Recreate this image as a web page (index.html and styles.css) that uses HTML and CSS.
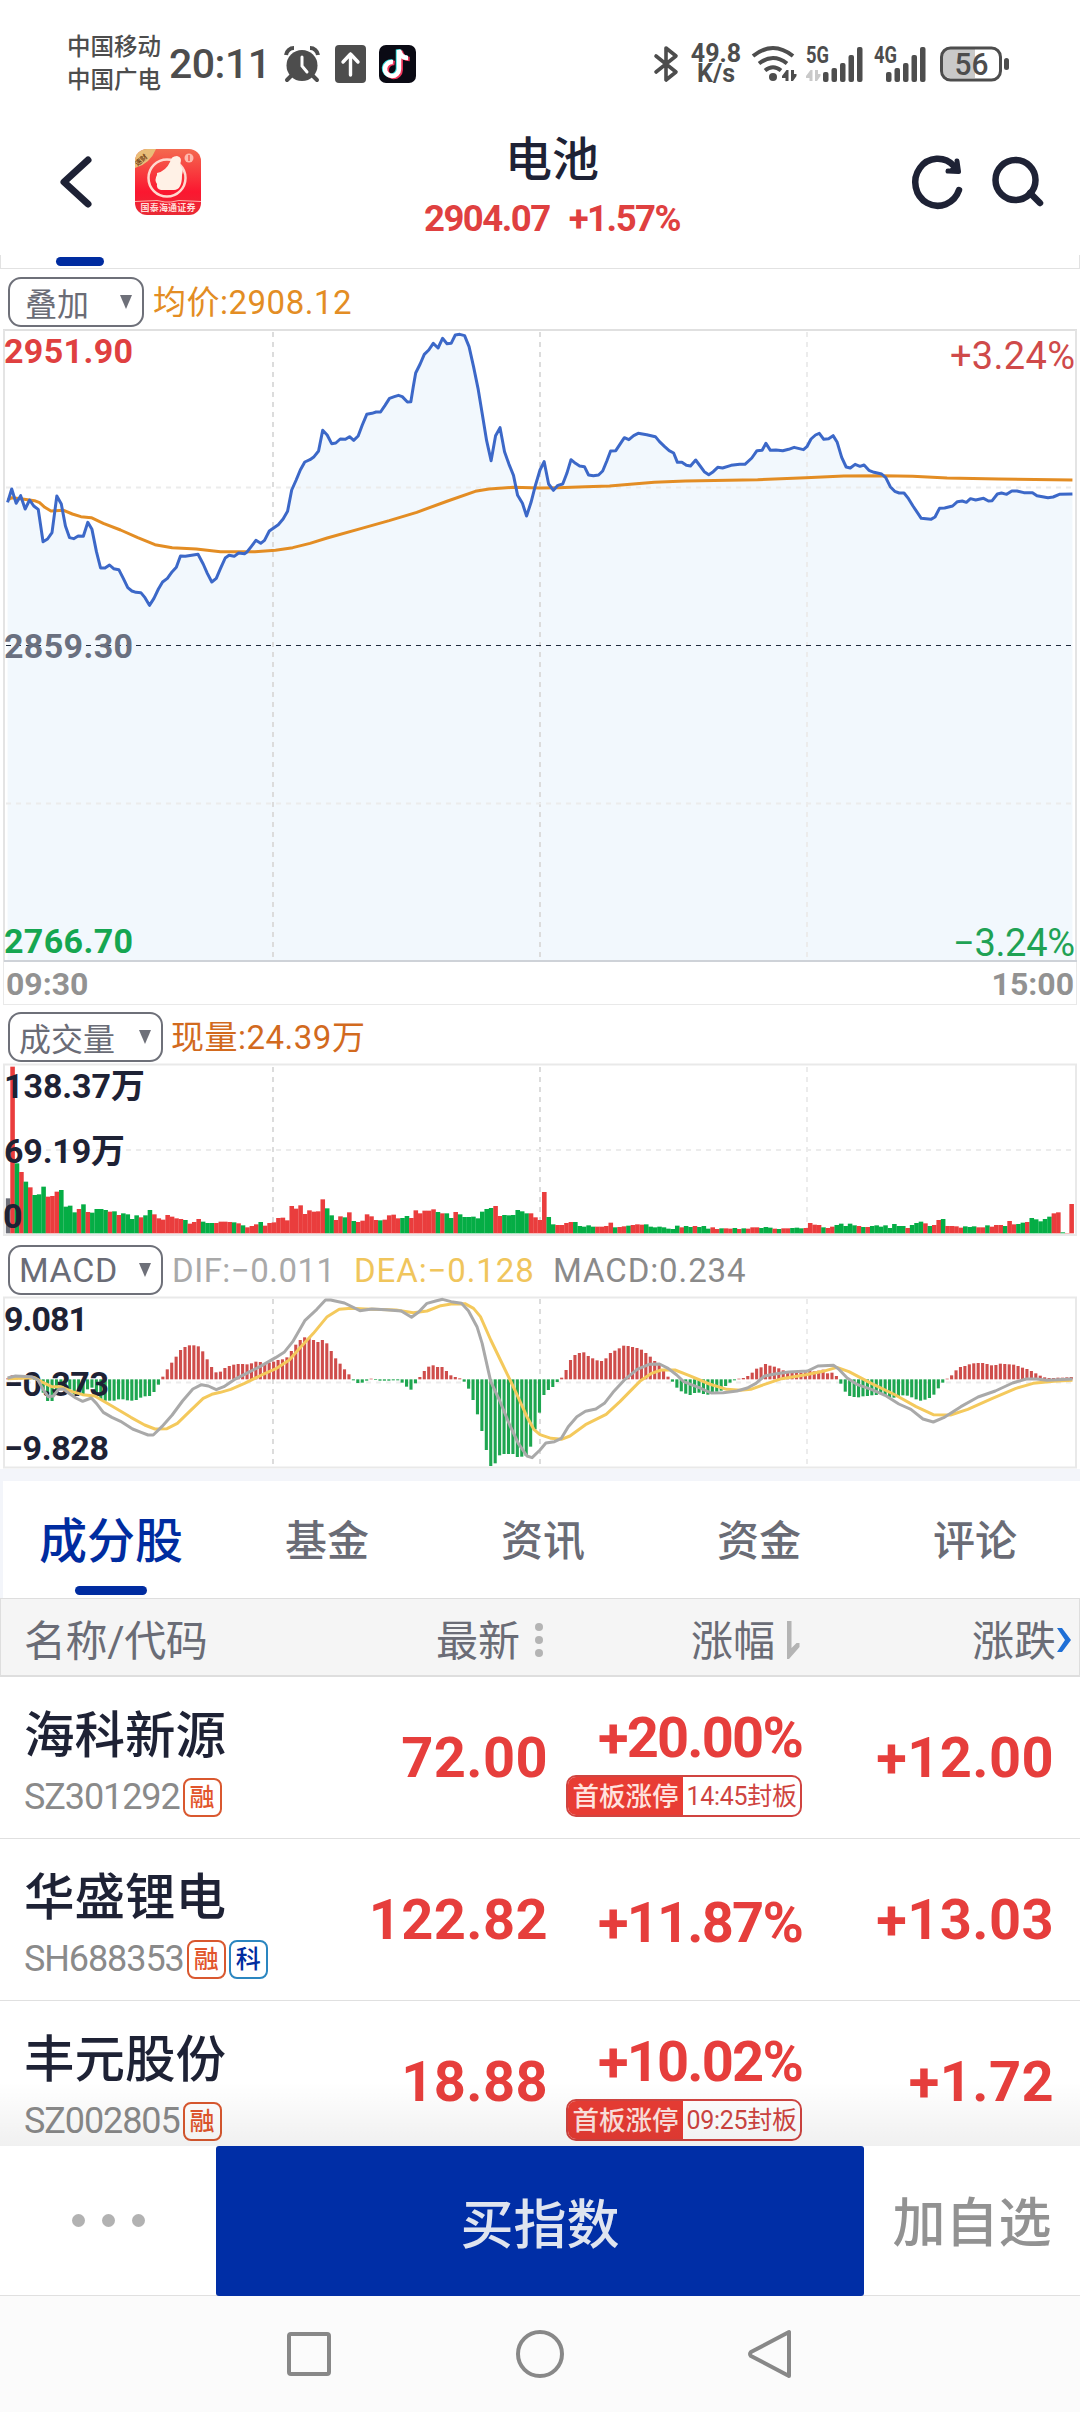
FILE: index.html
```
<!DOCTYPE html>
<html lang="zh-CN">
<head>
  <meta charset="UTF-8" />
  <title>电池</title>
  <link rel="stylesheet" href="styles.css">
</head>
<body>
  <!-- Status bar -->
  <div class="status-bar">
    <div class="carriers"><div>中国移动</div><div>中国广电</div></div>
    <div class="clock">20:11</div>
    <svg class="ic-alarm" width="36" height="36" viewBox="0 0 36 36">
      <circle cx="18" cy="19.500" r="15.500" fill="#4d4d4d"/>
      <path d="M2 9a8 8 0 0 1 8-7M34 9a8 8 0 0 0-8-7" stroke="#4d4d4d" stroke-width="4" fill="none"/>
      <path d="M7 30l-4 4M29 30l4 4" stroke="#4d4d4d" stroke-width="4" stroke-linecap="round"/>
      <path d="M18 11v9l5 6" stroke="#fff" stroke-width="3" stroke-linecap="round" fill="none"/>
    </svg>
    <svg class="ic-upload" width="31" height="38" viewBox="0 0 31 38">
      <rect width="31" height="38" rx="4" fill="#4d4d4d"/>
      <path d="M15.500 30V9M8 17l7.500-8 7.500 8" stroke="#fff" stroke-width="3.400" stroke-linecap="round" stroke-linejoin="round" fill="none"/>
    </svg>
    <svg class="ic-tiktok" width="37" height="38" viewBox="0 0 37 38">
      <rect width="37" height="38" rx="7" fill="#0a0a14"/>
      <g fill="none" stroke-width="4.500">
        <path d="M14 17a7 7 0 1 0 6 7V5c1 5 4 8 9 8" stroke="#35e0df" transform="translate(-1 -.5)"/>
        <path d="M14 17a7 7 0 1 0 6 7V5c1 5 4 8 9 8" stroke="#f0375c" transform="translate(1.700 1)"/>
        <path d="M14 17a7 7 0 1 0 6 7V5c1 5 4 8 9 8" stroke="#fff"/>
      </g>
    </svg>

    <svg class="ic-bt" width="25" height="36" viewBox="0 0 25 36">
      <path d="M2 10l20 16-10 8V2l10 8L2 26" fill="none" stroke="#4d4d4d" stroke-width="3.600" stroke-linejoin="round" stroke-linecap="round"/>
    </svg>
    <div class="net-speed"><div>49.8</div><div>K/s</div></div>
    <svg class="ic-wifi" width="45" height="38" viewBox="0 0 45 38">
      <g fill="none" stroke="#4d4d4d" stroke-width="4">
        <path d="M2 11q20-16 40 0M8 18.500q14-11 28 0M14 25.500q8-6.500 16 0"/>
      </g>
      <circle cx="22" cy="32" r="4" fill="#4d4d4d"/>
      <path d="M37.500 36V25h-2l-4.500 6v2h3.500v3zM40 25v11h2l3.500-5v-2H43v-4z" fill="#4d4d4d"/>
    </svg>
    <svg class="ic-5g" width="58" height="38" viewBox="0 0 58 38">
      <text x="0" y="18" textLength="23" lengthAdjust="spacingAndGlyphs" class="net-type">5G</text>
      <path d="M6.500 36V25h-2L0 31v2h3.500v3zM9 25v11h2l3.500-5v-2H12v-4z" fill="#c9c9c9"/>
      <g fill="#4d4d4d">
        <rect x="17" y="27" width="5.500" height="10" rx="2"/>
        <rect x="25.500" y="23" width="5.500" height="14" rx="2"/>
        <rect x="34" y="18" width="5.500" height="19" rx="2"/>
        <rect x="42.500" y="10" width="5.500" height="27" rx="2"/>
        <rect x="51" y="2" width="5.500" height="35" rx="2"/>
      </g>
    </svg>
    <svg class="ic-4g" width="53" height="38" viewBox="0 0 53 38">
      <text x="0" y="18" textLength="23" lengthAdjust="spacingAndGlyphs" class="net-type">4G</text>
      <g fill="#4d4d4d">
        <rect x="12" y="27" width="5.500" height="10" rx="2"/>
        <rect x="20.500" y="23" width="5.500" height="14" rx="2"/>
        <rect x="29" y="18" width="5.500" height="19" rx="2"/>
        <rect x="37.500" y="10" width="5.500" height="27" rx="2"/>
        <rect x="46" y="2" width="5.500" height="35" rx="2"/>
      </g>
    </svg>
    <svg class="ic-battery" width="70" height="36" viewBox="0 0 70 36">
      <path d="M10 3h25v29H10a7 7 0 0 1-7-7V10a7 7 0 0 1 7-7z" fill="#c9c9c9"/>
      <rect x="1.500" y="2" width="59" height="32" rx="9" fill="none" stroke="#4d4d4d" stroke-width="3"/>
      <rect x="64" y="12" width="5" height="12" rx="2.500" fill="#4d4d4d"/>
      <text x="14.500" y="29" textLength="34" lengthAdjust="spacingAndGlyphs" class="battery-text">56</text>
    </svg>
  </div>

  <!-- Header -->
  <div class="header">
    <svg class="ic-back" width="32" height="52" viewBox="0 0 32 52">
      <path d="M28 4L4 26l24 22" fill="none" stroke="#1e2235" stroke-width="7" stroke-linecap="round" stroke-linejoin="round"/>
    </svg>
    <svg class="app-logo" width="66" height="66" viewBox="0 0 66 66">
      <defs>
        <linearGradient id="logo-bg" x1="0" y1="0" x2="0" y2="1"><stop offset="0" stop-color="#f4694f"/><stop offset=".65" stop-color="#fb1730"/><stop offset="1" stop-color="#e92a35"/></linearGradient>
        <clipPath id="logo-clip"><rect width="66" height="66" rx="12"/></clipPath>
      </defs>
      <g clip-path="url(#logo-clip)">
        <rect width="66" height="66" fill="url(#logo-bg)"/>
        <path d="M0 0h21Q15 15 0 19z" fill="#e9bd78"/>
        <text x="0" y="17" font-size="7" class="logo-text" fill="#7b4a1d" transform="rotate(-42 2 14)">速财</text>
        <circle cx="32" cy="29" r="18.500" fill="none" stroke="#ffd9cf" stroke-width="2.500"/>
        <path d="M22 24q9-2 13-11 1-6 7-6 6 1 3 9 4 4 2 10 0 16-9 15H26q-5-1-4-6-3-4 0-9z" fill="#fff1e6"/>
        <circle cx="54" cy="9" r="4.500" fill="#ffb9ac"/>
        <path d="M54 6v6" stroke="#f4594b" stroke-width="1.500"/>
        <path d="M0 52.500l22-1 8 1.500h6l8-1.500 22 1" stroke="#ffb3ab" fill="none"/>
        <text x="5.500" y="62" font-size="9" textLength="55" class="logo-text" fill="#ffdcd8">国泰海通证券</text>
      </g>
    </svg>
    <div class="title">
      <h1>电池</h1>
      <div class="quote"><span>2904.07</span><span>+1.57%</span></div>
    </div>
    <svg class="ic-refresh" width="52" height="54" viewBox="0 0 52 54">
      <path d="M47 35A22.500 23.500 0 1 1 42 11" fill="none" stroke="#1e2235" stroke-width="6.500" stroke-linecap="round"/>
      <path d="M45 6l1.500 10.500-10.500-.5" fill="#1e2235" stroke="#1e2235" stroke-width="5" stroke-linecap="round" stroke-linejoin="round"/>
    </svg>
    <svg class="ic-search" width="52" height="54" viewBox="0 0 52 54">
      <circle cx="23.500" cy="25" r="20" fill="none" stroke="#1e2235" stroke-width="6.500"/>
      <path d="M38 38l10 10" stroke="#1e2235" stroke-width="6.500" stroke-linecap="round"/>
    </svg>
  </div>
  <div class="scroll-edge"><span class="pill"></span></div>

  <!-- Time-sharing chart -->
  <div class="chart-bar bar-price">
    <button class="picker picker-sm"><span>叠加</span><i></i></button>
    <span class="legend avg">均价:2908.12</span>
  </div>
  <svg class="chart" width="1080" height="633" viewBox="0 329 1080 633">
    <g transform="translate(0 270) scale(.34439 .33333)">
      <path id="price-area" fill="#f2f8fd"/>
    </g>
    <g class="grid">
      <path d="M273 332V961M540 332V961"/>
      <path class="faint" d="M807 332V961M6 487.500H1073M6 803.500H1073"/>
    </g>
    <path d="M6 645.500H1073" stroke="#1f2a3c" stroke-width="1.200" stroke-dasharray="5 5"/>
    <path d="M3 330H1077" stroke="#e0e0e0" stroke-width="2"/>
    <path d="M4 330V962M1076 330V962" stroke="#e4e4e4" stroke-width="2"/>
    <path d="M4 961H1077" stroke="#ced2d8" stroke-width="2"/>
    <g transform="translate(0 270) scale(.34439 .33333)">
      <polyline id="avg-line" class="line" stroke="#e38d24"/>
      <polyline id="price-line" class="line" stroke="#3c68c8"/>
    </g>
    <g class="axis">
      <text x="4" y="362.500" textLength="129" fill="#df4040">2951.90</text>
      <text x="4" y="657.500" textLength="129" fill="#6a7080">2859.30</text>
      <text x="4" y="952.500" textLength="129" fill="#15a651">2766.70</text>
    </g>
    <g class="axis-pct">
      <text x="950" y="368.500" textLength="125" fill="#cf4a4a">+3.24%</text>
      <text x="953" y="955.500" textLength="122" fill="#1fa255">−3.24%</text>
    </g>
  </svg>
  <div class="time-axis"><span>09:30</span><span>15:00</span></div>

  <!-- Volume -->
  <div class="chart-bar bar-volume">
    <button class="picker"><span>成交量</span><i></i></button>
    <span class="legend vol">现量:24.39万</span>
  </div>
  <svg class="chart" width="1080" height="172" viewBox="0 1064 1080 172">
    <g class="grid">
      <path d="M273 1067V1233M540 1067V1233"/>
      <path class="faint" d="M807 1067V1233M6 1150H1073"/>
    </g>
    <rect x="4" y="1064.500" width="1072" height="170.500" class="frame"/>
    <g id="volume-bars" transform="translate(0 900) scale(.34439 .33333)"></g>
    <g class="axis" fill="#1e2235">
      <text x="4" y="1098" textLength="141">138.37万</text>
      <text x="4" y="1163" textLength="121">69.19万</text>
      <text x="3" y="1228">0</text>
    </g>
  </svg>

  <!-- MACD -->
  <div class="chart-bar bar-macd">
    <button class="picker"><span class="latin">MACD</span><i></i></button>
    <span class="legend dif">DIF:−0.011</span>
    <span class="legend dea">DEA:−0.128</span>
    <span class="legend macd">MACD:0.234</span>
  </div>
  <svg class="chart" width="1080" height="172" viewBox="0 1297 1080 172">
    <g class="grid">
      <path d="M273 1299V1467M540 1299V1467"/>
      <path class="faint" d="M807 1299V1467M6 1382.500H1073"/>
    </g>
    <rect x="4" y="1297.500" width="1072" height="170" class="frame"/>
    <g id="macd-bars" transform="translate(0 1240) scale(.34439 .33333)"></g>
    <g class="axis" fill="#1e2235">
      <text x="4" y="1330.500" textLength="84">9.081</text>
      <text x="4" y="1395.500" textLength="105">−0.373</text>
      <text x="4" y="1459.500" textLength="105">−9.828</text>
    </g>
    <g transform="translate(0 1240) scale(.34439 .33333)">
      <polyline id="dea-line" class="line" stroke="#f4c95c"/>
      <polyline id="dif-line" class="line" stroke="#a9a9a9"/>
    </g>
  </svg>
  <div class="divider"></div>

  <!-- Tabs -->
  <div class="tabs">
    <div class="tab active">成分股</div>
    <div class="tab">基金</div>
    <div class="tab">资讯</div>
    <div class="tab">资金</div>
    <div class="tab">评论</div>
  </div>

  <!-- Constituents -->
  <div class="row table-head">
    <div class="col-name">名称/代码</div>
    <div class="col-price">最新
      <svg width="12" height="38" viewBox="0 0 12 38"><g fill="#b4b4b4"><circle cx="6" cy="6" r="4"/><circle cx="6" cy="19" r="4"/><circle cx="6" cy="32" r="4"/></g></svg>
    </div>
    <div class="col-pct">涨幅
      <svg width="13" height="40" viewBox="0 0 13 40"><path d="M0 1h4.500v27l5-5h3v4L2 39H0z" fill="#b4b4b4"/></svg>
    </div>
    <div class="col-change">涨跌<svg width="16" height="26" viewBox="0 0 16 26"><path d="M1 1h5l9 12-9 12H1l8-12z" fill="#1f6fd6"/></svg></div>
  </div>
  <div class="list">
    <div class="row stock">
      <div class="col-name">
        <div class="name">海科新源</div>
        <div class="code"><span>SZ301292</span><b class="tag">融</b></div>
      </div>
      <div class="col-price">72.00</div>
      <div class="col-pct"><div>+20.00%</div><div class="limit"><b>首板涨停</b><span>14:45封板</span></div></div>
      <div class="col-change">+12.00</div>
    </div>
    <div class="row stock">
      <div class="col-name">
        <div class="name">华盛锂电</div>
        <div class="code"><span>SH688353</span><b class="tag">融</b><b class="tag tag-blue">科</b></div>
      </div>
      <div class="col-price">122.82</div>
      <div class="col-pct"><div>+11.87%</div></div>
      <div class="col-change">+13.03</div>
    </div>
    <div class="row stock">
      <div class="col-name">
        <div class="name">丰元股份</div>
        <div class="code"><span>SZ002805</span><b class="tag">融</b></div>
      </div>
      <div class="col-price">18.88</div>
      <div class="col-pct"><div>+10.02%</div><div class="limit"><b>首板涨停</b><span>09:25封板</span></div></div>
      <div class="col-change">+1.72</div>
    </div>
    <div class="list-shade"></div>
  </div>

  <!-- Bottom actions -->
  <div class="actions">
    <div class="more"><i></i><i></i><i></i></div>
    <button class="buy">买指数</button>
    <div class="watch">加自选</div>
  </div>
  <div class="nav">
    <svg width="48" height="52" viewBox="0 0 48 52"><rect x="4" y="6" width="40" height="40" rx="2" class="nav-ic"/></svg>
    <svg width="50" height="52" viewBox="0 0 50 52"><circle cx="25" cy="26" r="22" class="nav-ic"/></svg>
    <svg width="48" height="52" viewBox="0 0 48 52"><path d="M42 4v44L4 28q-2-2 0-4z" class="nav-ic"/></svg>
  </div>

  <script src="chart.js"></script>
</body>
</html>
```
FILE: styles.css
```
* {
  box-sizing: border-box;
}

body {
  margin: 0;
  width: 1080px;
  height: 2412px;
  overflow: hidden;
  background: #fff;
  font-family: Roboto, "Noto Sans CJK SC", sans-serif;
  color: #1e2235;
}

svg {
  display: block;
  flex: none;
  overflow: visible;
}

button {
  font-family: inherit;
  border: none;
  background: none;
  padding: 0;
}

/* status bar */
.status-bar {
  height: 112px;
  padding: 15px 0 0 67px;
  display: flex;
  align-items: center;
  color: #4d4d4d;
}

.status-bar > * {
  flex: none;
}

.carriers {
  width: 102px;
  font-size: 23.5px;
  font-weight: 500;
  line-height: 33px;
}

.clock {
  width: 115px;
  font-size: 41px;
  font-weight: 500;
  letter-spacing: -0.5px;
  line-height: 60px;
}

.ic-upload { margin-left: 15px; }
.ic-tiktok { margin-left: 13px; }
.ic-bt { margin-left: 238px; }

.net-speed {
  width: 54px;
  margin-left: 10px;
  font-size: 25px;
  font-weight: 700;
  line-height: 20px;
  text-align: center;
}

.ic-wifi { margin-left: 8px; }
.ic-5g { margin-left: 10px; }
.ic-4g { margin-left: 10px; }
.ic-battery { margin-left: 13px; }

.net-type {
  font-size: 24px;
  font-weight: 700;
  fill: #4d4d4d;
}

.battery-text {
  font-size: 31px;
  font-weight: 500;
  fill: #4d4d4d;
}

/* header */
.header {
  height: 143px;
  padding: 0 0 3px 60px;
  display: flex;
  align-items: center;
}

.app-logo { margin-left: 43px; }

.logo-text {
  font-weight: 700;
}

.title {
  width: 300px;
  margin: 14px 0 0 201px;
  text-align: center;
}

.title h1 {
  margin: 0;
  font-size: 47px;
  font-weight: 500;
  line-height: 60px;
}

.quote {
  display: flex;
  justify-content: center;
  gap: 19px;
  margin-top: -1px;
  font-size: 36.5px;
  font-weight: 700;
  letter-spacing: -1.5px;
  line-height: 60px;
  color: #df4040;
}

.ic-refresh { margin-left: 210px; }
.ic-search { margin-left: 28px; }

.scroll-edge {
  height: 14px;
  padding: 2px 0 0 55px;
  border: 1px solid #e2e2e2;
  border-top: none;
}

.pill {
  display: block;
  width: 48px;
  height: 9px;
  border-radius: 5px;
  background: #002ca0;
}

/* chart toolbars */
.chart-bar {
  display: flex;
  align-items: center;
  padding-left: 8px;
  color: #6a6c76;
}

.bar-price { height: 60px; padding-top: 6px; }
.bar-volume { height: 59px; padding-top: 5px; }
.bar-macd { height: 61px; padding-top: 7px; }

.picker {
  width: 155px;
  height: 50px;
  padding: 0 10px 0 9px;
  border: 2px solid #6e7079;
  border-radius: 13px;
  display: flex;
  align-items: center;
  justify-content: space-between;
  font-size: 32px;
  color: #6a6c76;
  flex: none;
}

.picker-sm {
  width: 136px;
  padding: 0 10px 0 15px;
}

.picker .latin {
  font-size: 34px;
  letter-spacing: 0.6px;
}

.picker i {
  border-top: 14px solid #6e7079;
  border-left: 6.5px solid transparent;
  border-right: 6.5px solid transparent;
}

.legend {
  font-size: 33px;
  letter-spacing: 0.5px;
  line-height: 50px;
  white-space: nowrap;
  padding-top: 1px;
}

.avg { margin-left: 9px; color: #e38d24; }
.vol { margin-left: 8px; color: #d26a1e; }
.dif { width: 182px; margin-left: 9px; color: #a9a9a9; }
.dea { width: 199px; letter-spacing: 0.9px; color: #f0c55c; }
.macd { letter-spacing: 0.9px; color: #8a8a8a; }

/* charts */
.line {
  fill: none;
  stroke-width: 3;
  stroke-linejoin: round;
  vector-effect: non-scaling-stroke;
}

.grid path {
  stroke: #dcdcdc;
  stroke-width: 2;
  stroke-dasharray: 5 5;
  fill: none;
}

.grid .faint {
  stroke: #ececec;
}

.frame {
  fill: none;
  stroke: #e9e9e9;
  stroke-width: 2;
}

.axis {
  font-size: 34px;
  font-weight: 700;
}

.axis-pct {
  font-size: 38px;
}

.time-axis {
  height: 43px;
  margin: 0 3px;
  padding: 0 2px;
  display: flex;
  justify-content: space-between;
  font-size: 32px;
  font-weight: 700;
  line-height: 44px;
  color: #929292;
  border: 1px solid #e9e9e9;
  border-top: none;
}

.divider {
  height: 12px;
  background: #f3f5fa;
}

/* tabs */
.tabs {
  height: 117px;
  display: flex;
  border-left: 3px solid #f3f5fa;
}

.tab {
  width: 216px;
  flex: none;
  font-size: 42px;
  font-weight: 500;
  line-height: 122px;
  text-align: center;
  color: #6a6c76;
}

.tab.active {
  font-size: 48px;
  color: #002ca0;
}

.tab.active::after {
  content: "";
  display: block;
  width: 72px;
  height: 9px;
  margin: -17px auto 0;
  border-radius: 5px;
  background: #002ca0;
}

/* table */
.row {
  display: grid;
  grid-template-columns: 300px 248px 254px 252px;
  align-items: center;
}

.table-head {
  height: 79px;
  background: #f5f5f5;
  border: 1px solid #dedede;
  border-bottom-width: 2px;
  font-size: 42px;
  color: #6a6c76;
  line-height: 76px;
}

.col-name {
  padding-left: 24px;
}

.table-head > div {
  display: flex;
  white-space: nowrap;
  align-items: center;
  padding-top: 5px;
}

.table-head svg {
  margin-top: -5px;
}

.table-head .col-name { padding-left: 23px; letter-spacing: -0.4px; }
.table-head .col-price { justify-content: flex-end; gap: 13px; padding-right: 4px; }
.table-head .col-pct { justify-content: flex-end; gap: 12px; padding-right: 3px; }
.table-head .col-change { justify-content: flex-end; margin-right: -17px; }

.stock {
  height: 162px;
  border-bottom: 1px solid #e0e0e0;
}

.stock .col-price,
.stock .col-pct,
.stock .col-change {
  font-size: 56px;
  font-weight: 700;
  color: #e63e3c;
  text-align: right;
  line-height: 64px;
}

.stock .col-price,
.stock .col-change {
  letter-spacing: 0.4px;
  padding-top: 1px;
}

.stock .col-pct {
  letter-spacing: -1.8px;
  padding-top: 7px;
}

.name {
  font-size: 50.5px;
  font-weight: 500;
  line-height: 62px;
  margin-top: 17px;
}

.code {
  display: flex;
  align-items: center;
  gap: 3px;
  height: 60px;
  font-size: 36px;
  letter-spacing: -1.1px;
  color: #8a8a8a;
}

.tag {
  width: 39px;
  height: 39px;
  border: 2px solid #d9582f;
  border-radius: 8px;
  font-size: 25px;
  font-weight: 500;
  letter-spacing: 0;
  line-height: 36px;
  text-align: center;
  color: #e2552c;
}

.tag-blue {
  border-color: #2a86c0;
  color: #002ca0;
}

.limit {
  height: 42px;
  width: 236px;
  margin: 5px 0 0 auto;
  display: flex;
  border: 2px solid #d04440;
  border-radius: 10px;
  overflow: hidden;
  letter-spacing: 0;
  line-height: 39px;
  white-space: nowrap;
}

.limit b {
  width: 115px;
  background: #e83c34;
  color: #ffe3df;
  font-size: 26.5px;
  font-weight: 500;
  text-align: center;
}

.limit span {
  flex: 1;
  font-size: 25px;
  font-weight: 400;
  letter-spacing: -0.3px;
  text-align: center;
  color: #cf4440;
}

.list {
  position: relative;
  height: 469px;
  overflow: hidden;
}

.list-shade {
  position: absolute;
  left: 0;
  right: 0;
  bottom: 0;
  height: 64px;
  background: linear-gradient(rgba(0, 0, 0, 0), rgba(0, 0, 0, 0.06));
}

/* bottom */
.actions {
  height: 150px;
  display: flex;
  border-bottom: 1px solid #e0e0e0;
  font-size: 53px;
  font-weight: 500;
}

.more {
  width: 216px;
  display: flex;
  align-items: center;
  justify-content: center;
  gap: 17px;
}

.more i {
  width: 13px;
  height: 13px;
  border-radius: 50%;
  background: #b2b2b2;
}

.buy {
  width: 648px;
  height: 150px;
  border-radius: 3px;
  background: #002ea6;
  color: #dfe4ef;
  font-size: 53px;
  font-weight: 500;
}

.watch {
  flex: 1;
  text-align: center;
  line-height: 157px;
  color: #929292;
}

.nav {
  height: 116px;
  padding-left: 285px;
  display: flex;
  align-items: center;
  gap: 182px;
  background: #fbfbfb;
}

.nav-ic {
  fill: none;
  stroke: #888;
  stroke-width: 4;
  stroke-linejoin: round;
}
```
FILE: chart.js
```
const SVG_NS = 'http://www.w3.org/2000/svg';
const STEP = 12.867; // one minute
const RED = '#ea3d3d';
const GREEN = '#05ad45';

const price = `22,697 34,657 47,700 60,677 73,717 86,690 98,708 111,718 125,815 138,807 151,788 165,678 178,702 190,768 202,803 214,806 227,798 242,799 255,757 267,778
280,845 292,894 305,894 318,885 330,896 345,899 358,925 371,953 383,963 395,967 409,968 421,983 434,1006 447,985 460,957 472,936 486,925 500,905 512,892 524,858
538,859 575,853 590,882 602,910 615,936 628,925 640,896 654,864 665,856 680,859 693,849 710,851 718,845 730,829 743,811 757,820 768,811 782,783 808,764 822,747
835,724 847,660 860,630 872,600 885,576 900,569 912,560 925,543 937,481 950,495 963,521 975,519 988,507 1003,508 1015,500 1027,511 1040,498 1052,465 1065,433
1080,430 1092,426 1105,426 1118,406 1131,385 1145,380 1157,376 1168,380 1183,396 1193,395 1200,350 1207,309 1220,282 1232,253 1245,240 1258,220 1272,234 1285,205
1298,221 1310,220 1322,195 1335,193 1349,197 1362,230 1375,290 1388,355 1400,430 1413,512 1426,572 1439,497 1452,473 1465,545 1478,583 1491,616 1503,676 1517,700
1529,738 1542,697 1555,645 1568,600 1580,575 1593,642 1607,661 1620,646 1634,642 1646,610 1658,569 1671,580 1683,588 1697,590 1709,615 1723,617 1738,615 1750,603
1762,573 1773,543 1788,542 1800,523 1813,503 1826,509 1840,497 1853,490 1878,494 1903,500 1915,515 1930,530 1943,542 1956,549 1967,577 1980,577 1993,586 2005,588
2020,570 2033,588 2045,605 2058,614 2071,605 2084,592 2098,594 2123,586 2148,583 2163,583 2183,564 2198,542 2213,541 2224,520 2237,541 2253,540 2273,542 2290,538
2306,532 2333,539 2343,530 2355,507 2368,495 2379,490 2392,508 2406,506 2419,497 2431,517 2444,562 2457,591 2469,594 2483,583 2497,589 2509,585 2523,601 2538,607
2560,612 2572,623 2585,650 2598,664 2611,669 2625,669 2638,686 2651,708 2675,745 2703,748 2715,741 2728,715 2743,714 2766,708 2780,695 2794,693 2806,697 2818,686
2833,690 2856,685 2870,693 2881,692 2896,672 2908,669 2923,673 2938,663 2953,663 2973,668 2998,668 3011,677 3043,683 3058,681 3076,673 3114,672`;

const avg = `22,690 35,683 60,686 100,692 115,698 130,712 148,723 185,721 210,732 235,740 265,743 300,760 350,780 400,803 450,824 500,833 570,837 640,845 740,845 800,841
850,833 900,820 950,804 1050,775 1130,752 1210,727 1300,693 1380,664 1420,657 1490,652 1568,654 1620,653 1700,650 1770,648 1830,643 1900,637 1990,633 2200,629
2340,623 2450,618 2560,617 2650,619 2750,624 2900,627 3114,630`;

const dif = `22,414 45,408 90,410 110,420 125,448 140,470 155,468 170,448 185,447 200,460 220,474 240,484 265,474 280,490 300,517 325,532 350,544 385,567 410,577 430,585
445,585 470,560 500,525 530,483 560,447 585,434 605,438 628,449 650,440 680,419 720,398 760,377 800,353 825,337 850,305 885,242 920,208 945,180 960,180 1000,189
1045,212 1080,207 1120,209 1165,213 1195,232 1215,217 1240,190 1265,183 1285,178 1310,185 1340,190 1360,212 1385,260 1400,310 1425,425 1450,480 1480,555 1505,610
1530,648 1545,653 1568,630 1585,609 1610,605 1630,595 1650,560 1675,530 1700,514 1730,507 1755,490 1780,457 1815,418 1850,388 1885,373 1915,372 1940,385 1965,405
1985,425 2030,443 2065,459 2100,458 2140,453 2170,444 2195,430 2220,408 2250,402 2290,396 2345,393 2375,378 2420,376 2435,387 2460,414 2490,434 2530,448 2570,466
2610,492 2645,508 2680,537 2710,546 2740,533 2790,500 2840,471 2890,453 2940,429 2980,417 3010,417 3040,421 3114,417`;

const dea = `22,416 100,413 120,425 150,440 175,440 210,455 240,464 275,468 320,495 380,532 420,555 450,567 485,566 515,550 550,515 590,475 615,463 640,457 670,448 710,430
760,405 800,387 840,360 870,325 910,280 950,230 985,208 1020,205 1060,207 1150,210 1200,218 1240,213 1280,197 1310,192 1350,191 1375,205 1395,230 1425,300 1460,375
1495,450 1530,530 1550,568 1568,584 1600,595 1630,598 1655,588 1700,554 1760,523 1800,485 1860,422 1890,401 1920,390 1960,390 2000,406 2060,432 2110,448 2150,451
2180,448 2220,433 2270,416 2340,404 2390,394 2430,382 2465,395 2530,430 2600,465 2660,500 2710,524 2760,525 2810,508 2880,476 2950,445 3000,430 3060,424 3114,421`;

// r = up, g = down, x = opening auction
const volume = `x105 r500 g210 r184 g155 r138 g115 g117 g140 r110 r112 r125 g130 g80 g83 g63 r73 g87 r64 g62 g73 g73 g70 r65 g66 r55 g60 g57 g43 g54 r48 g54 g70 r57 r45 r41 r55 r50 r45 r43
g40 r29 r34 r43 g35 g31 g31 r31 r35 r35 r34 g33 r30 g24 r18 r22 r27 g34 r23 r31 r33 r46 r47 r39 r82 r74 r84 r58 r69 r65 r66 r102 g75 g54 r40 r51 g48 r63 g37 r34
r38 r57 r51 r40 g39 r41 r54 r56 r45 g46 g52 r46 r69 r60 r68 r68 r72 g64 r60 g60 g46 r64 g57 g49 g49 g50 g45 g65 g73 g76 r82 r52 g55 g54 g55 g70 g66 g60 r60 r48
r40 r124 g49 g27 r25 r25 r31 r34 g34 g22 g20 g24 g20 r20 r20 r22 r32 g18 r19 r21 g23 r25 r27 r26 g27 g20 g18 g20 g18 g14 g13 g23 r18 g22 g19 r22 g19 g22 g14 r18
r13 g15 r15 r14 g16 r13 g15 r14 r18 r18 g16 g19 g17 r14 g13 r15 r15 g16 g17 g15 r16 r31 r26 r25 g18 r16 r20 g25 g29 g22 g29 g24 r22 g19 r19 g22 g24 g20 g24 g16
g28 g22 g22 r16 g25 g31 g35 r30 g22 r25 r40 g43 r22 r22 r21 r17 g21 g19 g21 r18 r18 g24 r20 r25 r25 g22 r37 r27 g28 g32 r34 g46 g42 g36 g43 g50 r60 r63 g3 r1 r88`.split(/\s+/);

const macd = [
  3, 12, 4, 3, 2, 2, -2, -8, -40, -65, -65, -40, -20, -15, -30, -45, -45, -45, -30, -25, -40, -60, -64, -64, -64, -60, -60, -63, -64, -62,
  -55, -51, -50, -38, -16, 8, 30, 50, 68, 88, 97, 102, 102, 99, 84, 60, 37, 21, 23, 34, 40, 44, 46, 46, 45, 48, 53, 52, 47, 50,
  53, 58, 60, 66, 85, 104, 118, 126, 124, 118, 112, 118, 108, 85, 63, 47, 30, 15, -3, -11, -10, -4, 2, -2, -4, -4, -4, -3, -3, -10,
  -22, -31, -12, 7, 25, 38, 42, 37, 37, 25, 12, 7, 3, -7, -28, -62, -105, -155, -212, -260, -252, -228, -224, -224, -224, -233, -232, -230, -202, -150,
  -100, -47, -32, -23, -8, 5, 28, 58, 73, 79, 81, 70, 63, 57, 55, 63, 79, 86, 93, 101, 100, 97, 94, 89, 79, 68, 55, 43, 25, 8,
  -7, -25, -36, -43, -47, -41, -40, -44, -46, -40, -37, -34, -20, -10, -3, 2, 4, 10, 20, 32, 36, 46, 41, 38, 33, 27, 22, 20, 20, 20,
  21, 27, 24, 26, 29, 18, 20, 10, -13, -37, -50, -53, -54, -51, -50, -48, -47, -44, -48, -54, -55, -50, -48, -49, -54, -60, -64, -61, -56, -46,
  -27, -10, 2, 12, 27, 37, 40, 45, 48, 49, 49, 46, 42, 43, 47, 46, 45, 44, 40, 35, 31, 25, 18, 11, 6, 4, 4, 5, 5, 6, 7
];

function addBar(parent, x, y, w, h, color) {
  const bar = document.createElementNS(SVG_NS, 'rect');
  bar.setAttribute('x', x);
  bar.setAttribute('y', y);
  bar.setAttribute('width', w);
  bar.setAttribute('height', h);
  bar.setAttribute('fill', color);
  parent.appendChild(bar);
}

document.getElementById('price-line').setAttribute('points', price);
document.getElementById('avg-line').setAttribute('points', avg);
document.getElementById('dif-line').setAttribute('points', dif);
document.getElementById('dea-line').setAttribute('points', dea);
document.getElementById('price-area').setAttribute('d', 'M22,2073 L' + price + ' L3114,2073 Z');

const volumeBars = document.getElementById('volume-bars');
volume.forEach((v, i) => {
  const colors = { r: RED, g: GREEN, x: '#6e7079' };
  const h = Number(v.slice(1));
  addBar(volumeBars, 17 + i * STEP, 1000 - h, STEP + 0.4, h, colors[v[0]]);
});

const macdBars = document.getElementById('macd-bars');
macd.forEach((v, i) => {
  addBar(macdBars, 18 + i * STEP, v > 0 ? 418 - v : 418, 9, Math.abs(v), v > 0 ? '#cf4d4b' : '#1ea650');
});
```
